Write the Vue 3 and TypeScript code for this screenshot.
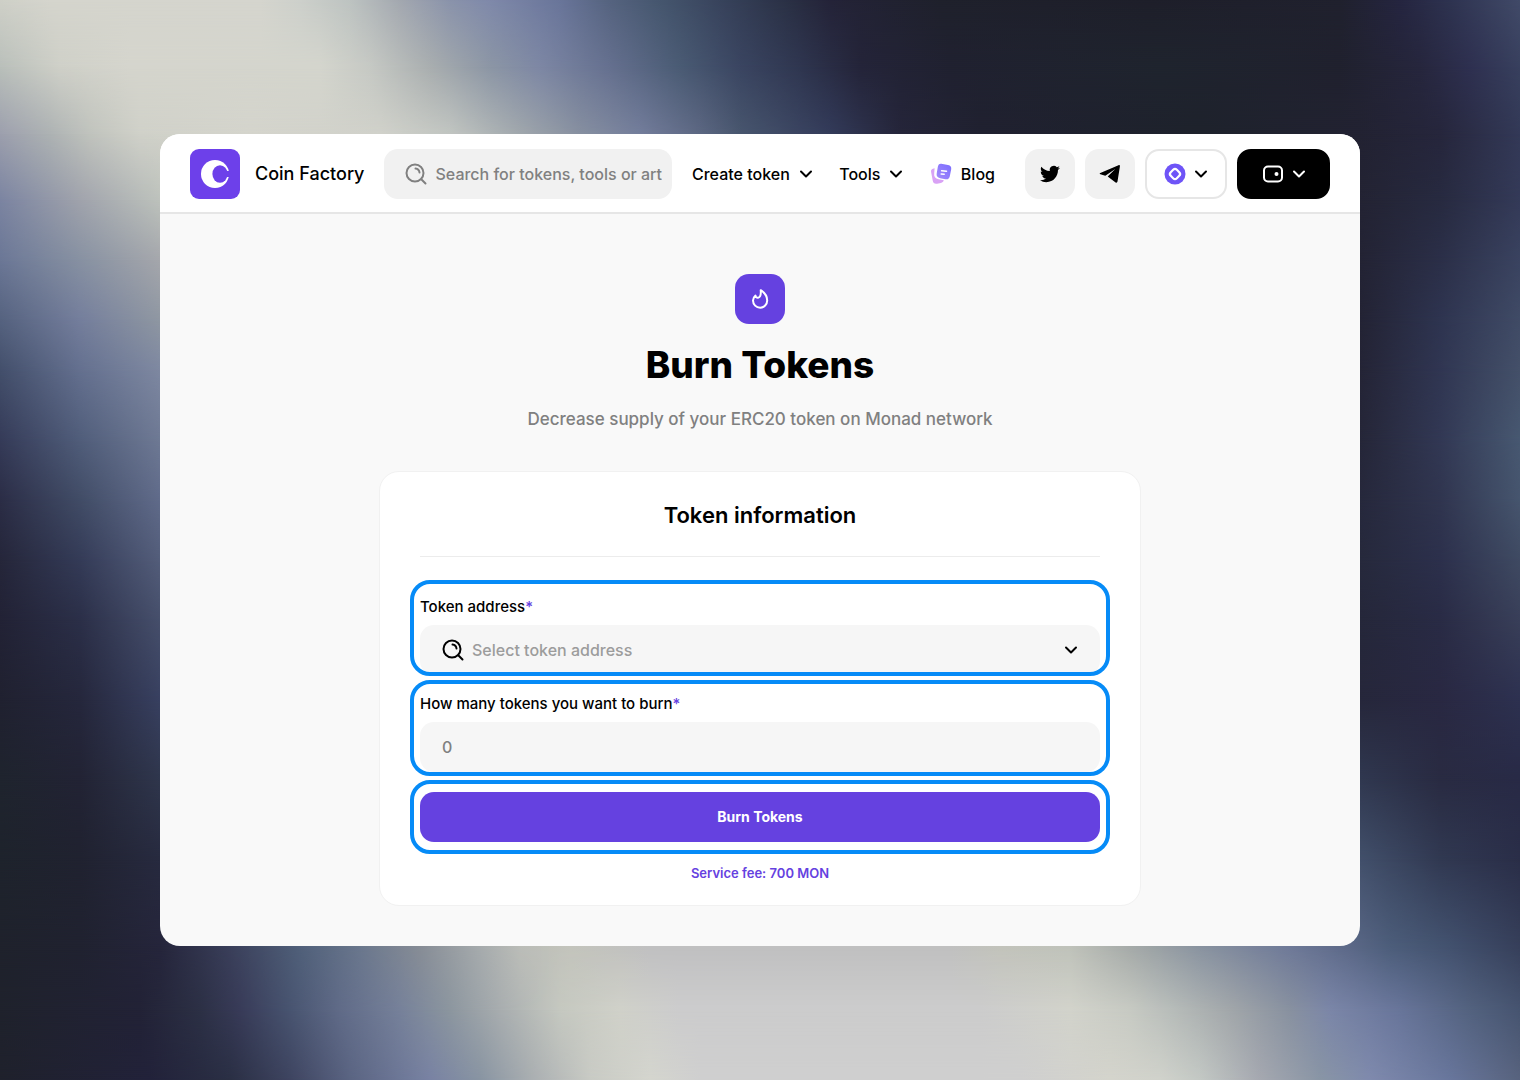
<script setup lang="ts">
import { ref } from 'vue'

type Stop = [x: number, color: string]
interface Row {
  y: number
  stops: Stop[]
}

// Colour mesh of the backdrop: each row is a horizontal gradient that fades into the next one.
const MESH_WIDTH = 1520
const MESH_HEIGHT = 1080

const side = (y: number, l: string[], r: string[]): Row => ({
  y,
  stops: [
    [0, l[0]], [80, l[1]], [160, l[2]],
    [1360, r[0]], [1440, r[1]], [1520, r[2]],
  ],
})

const rows: Row[] = [
  { y: 0, stops: [[0, '#cfd0c8'], [50, '#d5d5cd'], [260, '#d5d5ce'], [300, '#cdd0cb'], [350, '#bdc3c1'], [400, '#a3a8b0'], [450, '#8a93ab'], [490, '#7f89aa'], [560, '#69759a'], [610, '#55637f'], [660, '#45566e'], [720, '#38435c'], [790, '#2a3044'], [830, '#242338'], [940, '#1f212c'], [1150, '#1e1f2a'], [1340, '#20212e'], [1400, '#252540'], [1450, '#2e3350'], [1520, '#414a68']] },
  { y: 67, stops: [[0, '#b9bfba'], [60, '#cfd0c8'], [130, '#d5d5cd'], [320, '#d4d5cd'], [370, '#c6c9c4'], [430, '#a9aeaf'], [490, '#8c96a5'], [540, '#7d87a4'], [610, '#65708f'], [680, '#4a5b74'], [740, '#3a4561'], [800, '#2f3650'], [860, '#242439'], [950, '#202130'], [1160, '#1f242e'], [1340, '#20212e'], [1420, '#26263d'], [1470, '#2e3050'], [1520, '#38405e']] },
  { y: 134, stops: [[0, '#9c9fad'], [50, '#adb2b3'], [90, '#c0c3bd'], [140, '#d0d1c9'], [250, '#d4d4cc'], [380, '#d0d1ca'], [450, '#c1c5c1'], [520, '#a0a7ac'], [580, '#868fa0'], [640, '#737d9b'], [700, '#5c6782'], [740, '#48566e'], [830, '#333b5a'], [900, '#25253a'], [980, '#202130'], [1200, '#1e222c'], [1360, '#222232'], [1440, '#26263c'], [1520, '#333957']] },
  side(200, ['#7b84a1', '#a0a3ac', '#bdc2bc'], ['#232333', '#272a40', '#343a58']),
  side(260, ['#6b7796', '#8791a2', '#a5a7ac'], ['#232334', '#2b2f48', '#3a4360']),
  side(320, ['#55627f', '#747e9c', '#8f97a2'], ['#232334', '#2e3450', '#404b66']),
  side(370, ['#434f6b', '#64708f', '#7e88a1'], ['#242436', '#303652', '#445069']),
  side(440, ['#353b58', '#505d7a', '#6e7994'], ['#252638', '#323854', '#475871']),
  side(500, ['#2b2d46', '#414c66', '#606b8a'], ['#26283c', '#30354f', '#46556e']),
  side(560, ['#25263a', '#343b57', '#535d7a'], ['#26293c', '#2c304c', '#3f4a62']),
  side(620, ['#222235', '#2b2f48', '#464f6b'], ['#25273a', '#292b45', '#393f59']),
  side(700, ['#202130', '#25273c', '#384060'], ['#26273b', '#292842', '#2d3150']),
  side(780, ['#1f242e', '#222334', '#2f364c'], ['#303850', '#292b42', '#282a46']),
  side(860, ['#1e232c', '#202230', '#272a3f'], ['#42506b', '#313952', '#2a2e48']),
  { y: 946, stops: [[0, '#1f222c'], [80, '#202230'], [160, '#25253b'], [230, '#3a3f5a'], [300, '#50607a'], [360, '#6a778d'], [420, '#878d96'], [480, '#a6abad'], [520, '#bbbdb8'], [570, '#c3c4bc'], [650, '#c0c0c1'], [950, '#c0c0c0'], [1000, '#c2c3bb'], [1070, '#bfc2ba'], [1130, '#a5aaa8'], [1200, '#8993a0'], [1290, '#6e7998'], [1350, '#5b6887'], [1390, '#4c5d7a'], [1450, '#42516e'], [1520, '#363f5a']] },
  { y: 1010, stops: [[0, '#1f222c'], [140, '#222236'], [200, '#2c3045'], [240, '#383b58'], [290, '#485470'], [340, '#606b88'], [400, '#76819a'], [450, '#8c969f'], [500, '#a8adaf'], [560, '#c5c8c0'], [620, '#d0d1c9'], [680, '#cccccd'], [980, '#cccccc'], [1070, '#d2d3cb'], [1130, '#c7cac3'], [1170, '#b8bdba'], [1230, '#a2a7aa'], [1290, '#8891a0'], [1330, '#7b86a8'], [1400, '#68759a'], [1470, '#53627f'], [1520, '#465470']] },
  { y: 1080, stops: [[0, '#1f212c'], [150, '#22223a'], [230, '#2a2f44'], [290, '#3e4460'], [350, '#5a6482'], [430, '#7882a3'], [480, '#8894a2'], [530, '#a8adb0'], [590, '#c8cac4'], [650, '#d4d5ce'], [700, '#cfcfcf'], [1020, '#cfcfcf'], [1110, '#d4d4cc'], [1160, '#d0d2cb'], [1200, '#c3c8c4'], [1260, '#a5a8b0'], [1320, '#8995a5'], [1370, '#7f8aad'], [1450, '#68769c'], [1520, '#58637e']] },
]

const layers = rows.map((row, i) => {
  const stops = row.stops.map(([x, c]) => `${c} ${((x / MESH_WIDTH) * 100).toFixed(2)}%`).join(', ')
  const style: Record<string, string> = { backgroundImage: `linear-gradient(to right, ${stops})` }
  if (i > 0) {
    const from = ((rows[i - 1].y / MESH_HEIGHT) * 100).toFixed(2)
    const to = ((row.y / MESH_HEIGHT) * 100).toFixed(2)
    style.maskImage = `linear-gradient(to bottom, transparent ${from}%, #000 ${to}%)`
  }
  return style
})

const query = ref('')
const address = ref('')
const amount = ref('')
</script>

<template>
  <div class="page">
    <div class="backdrop" aria-hidden="true">
      <div v-for="(layer, i) in layers" :key="i" class="backdrop-row" :style="layer"></div>
    </div>

    <div class="window">
      <header class="header">
        <a href="#" class="brand">
          <svg class="logo" viewBox="0 0 50 50" aria-hidden="true">
            <rect width="50" height="50" rx="9" fill="#6d40ea" />
            <circle cx="25" cy="25" r="14" fill="#fff" />
            <ellipse cx="30" cy="25" rx="7.600" ry="8.800" fill="#6d40ea" />
            <rect x="34" y="22" width="6" height="6" fill="#6d40ea" />
          </svg>
          <span>Coin Factory</span>
        </a>

        <label class="search">
          <svg width="22" height="22" viewBox="0 0 22 22" class="line" aria-hidden="true">
            <circle cx="10" cy="10" r="8.500" />
            <path d="M16.500 16.500 20.500 20.500M10.500 5.500a4.500 4.500 0 0 1 4 4" />
          </svg>
          <input v-model="query" type="text" placeholder="Search for tokens, tools or art" aria-label="Search" />
        </label>

        <nav class="nav">
          <button type="button" class="nav-item">
            <span>Create token</span>
            <svg width="14" height="10" viewBox="0 0 14 10" class="line chevron" aria-hidden="true"><path d="M2 2.500 7 7.500l5-5" /></svg>
          </button>
          <button type="button" class="nav-item">
            <span>Tools</span>
            <svg width="14" height="10" viewBox="0 0 14 10" class="line chevron" aria-hidden="true"><path d="M2 2.500 7 7.500l5-5" /></svg>
          </button>
          <a href="#" class="nav-item">
            <svg width="22" height="22" viewBox="0 0 22 22" aria-hidden="true">
              <defs>
                <linearGradient id="blog-front" x1="1" y1="0" x2="0" y2="1">
                  <stop offset="0" stop-color="#7a6cff" />
                  <stop offset="1" stop-color="#a58cfa" />
                </linearGradient>
              </defs>
              <path
                fill="#d9a2f5"
                d="M4.600 5.300 2.900 5.800C1.400 6.300.8 7.400 1.100 8.900l1.600 8.600c.5 2.600 2 3.700 4.400 3.200l3.800-.8c1.500-.4 2.500-1.300 2.900-2.700l-5.200-.9c-3.300-.7-4.900-2.900-4.400-6.100z"
              />
              <path
                fill="url(#blog-front)"
                d="M11.300.7 18 1.900c2.600.5 3.600 2 3.200 4.400l-1.400 6.900c-.5 2.400-2 3.500-4.400 3l-5.200-1c-2.800-.5-4-2.100-3.500-4.600L7.800 4C8.200 1.600 9.300.4 11.300.7z"
              />
              <path d="M11.600 7.800l4.900.4M11.200 11l3 .3" stroke="#fff" stroke-width="1.500" stroke-linecap="round" />
            </svg>
            <span>Blog</span>
          </a>
        </nav>

        <div class="actions">
          <a href="#" class="tile" aria-label="Twitter">
            <svg width="20" height="20" viewBox="0 0 24 24" aria-hidden="true">
              <path
                fill="#000"
                d="M23.953 4.570a10 10 0 0 1-2.825.775 4.958 4.958 0 0 0 2.163-2.723c-.951.555-2.005.959-3.127 1.184a4.920 4.920 0 0 0-8.384 4.482C7.690 8.095 4.067 6.130 1.640 3.162a4.822 4.822 0 0 0-.666 2.475c0 1.710.87 3.213 2.188 4.096a4.904 4.904 0 0 1-2.228-.616v.06a4.923 4.923 0 0 0 3.946 4.827 4.996 4.996 0 0 1-2.212.085 4.936 4.936 0 0 0 4.604 3.417 9.867 9.867 0 0 1-6.102 2.105c-.39 0-.779-.023-1.170-.067a13.995 13.995 0 0 0 7.557 2.209c9.053 0 13.998-7.496 13.998-13.985 0-.21 0-.42-.015-.63A9.935 9.935 0 0 0 24 4.590z"
              />
            </svg>
          </a>
          <a href="#" class="tile" aria-label="Telegram">
            <svg width="22" height="20" viewBox="0 0 22 20" aria-hidden="true">
              <path
                fill="#000"
                d="M19.500 1.200 1.300 8.900c-.8.400-.8 1 .1 1.300l4.900 1.500L16.300 5l-7.600 7.500 7.900 5.900c.9.600 1.600.3 1.900-.8l2.400-15.200c.1-1.100-.5-1.600-1.400-1.200z"
              />
            </svg>
          </a>
          <button type="button" class="pill" aria-label="Network">
            <svg width="22" height="22" viewBox="0 0 22 22" aria-hidden="true">
              <circle cx="11" cy="11" r="10.500" fill="#6e54f7" />
              <rect x="6.700" y="6.700" width="8.600" height="8.600" rx="2.600" transform="rotate(45 11 11)" fill="none" stroke="#fff" stroke-width="2.200" />
            </svg>
            <svg width="14" height="10" viewBox="0 0 14 10" class="line chevron" aria-hidden="true"><path d="M2 2.500 7 7.500l5-5" /></svg>
          </button>
          <button type="button" class="pill dark" aria-label="Wallet">
            <svg width="22" height="18" viewBox="0 0 22 18" aria-hidden="true">
              <rect x="2" y="1.500" width="18" height="15" rx="4" fill="none" stroke="#fff" stroke-width="2" />
              <circle cx="14.500" cy="9" r="2" fill="#fff" />
            </svg>
            <svg width="14" height="10" viewBox="0 0 14 10" class="line chevron" aria-hidden="true"><path d="M2 2.500 7 7.500l5-5" /></svg>
          </button>
        </div>
      </header>

      <main class="main">
        <div class="badge">
          <svg width="24" height="24" viewBox="0 0 24 24" class="line" aria-hidden="true">
            <path d="M12.700 3.200C16.600 5.700 19.200 9.200 19.200 13.500a7.100 7.100 0 0 1-14.200.1c0-2 .9-3.700 2.500-5 .2 1.500 1.200 2.300 2.500 2.100 2.200-.3 3.100-3.300 2.700-7.500z" />
          </svg>
        </div>
        <h1>Burn Tokens</h1>
        <p class="subtitle">Decrease supply of your ERC20 token on Monad network</p>

        <form class="card" @submit.prevent>
          <h2>Token information</h2>
          <div class="fields">
            <div class="field">
              <label for="address">Token address<span class="star">*</span></label>
              <div class="control">
                <svg width="22" height="22" viewBox="0 0 22 22" class="line glass" aria-hidden="true">
                  <circle cx="10" cy="10" r="8.500" />
                  <path d="M16.500 16.500 20.500 20.500M10.500 5.500a4.500 4.500 0 0 1 4 4" />
                </svg>
                <select id="address" v-model="address">
                  <option value="">Select token address</option>
                </select>
                <svg width="14" height="10" viewBox="0 0 14 10" class="line chevron caret" aria-hidden="true"><path d="M2 2.500 7 7.500l5-5" /></svg>
              </div>
            </div>
            <div class="field amount">
              <label for="amount">How many tokens you want to burn<span class="star">*</span></label>
              <input id="amount" v-model="amount" type="text" inputmode="decimal" placeholder="0" />
            </div>
            <div class="field action">
              <button type="submit" class="submit">Burn Tokens</button>
            </div>
          </div>
          <p class="fee">Service fee: 700 MON</p>
        </form>
      </main>
    </div>
  </div>
</template>

<style>
body {
  margin: 0;
}
</style>

<style scoped>
* {
  box-sizing: border-box;
}

.page {
  position: relative;
  display: flex;
  justify-content: center;
  min-height: 100vh;
  padding: 134px 160px;
  font-family: Inter, 'Liberation Sans', sans-serif;
  font-size: 16px;
  font-weight: 500;
  line-height: 20px;
  color: #000;
}

.backdrop,
.backdrop-row {
  position: absolute;
  inset: 0;
}

.window {
  position: relative;
  flex: 1;
  min-width: 0;
  border-radius: 20px;
  background: #f9f9f9;
  overflow: hidden;
}

button,
input,
select {
  font: inherit;
  color: inherit;
  border: 0;
  outline: 0;
  background: none;
}

button {
  padding: 0;
  cursor: pointer;
}

a {
  color: inherit;
  text-decoration: none;
}

svg {
  display: block;
  flex: none;
}

.line {
  fill: none;
  stroke: currentColor;
  stroke-width: 2;
  stroke-linecap: round;
  stroke-linejoin: round;
}

.header {
  display: flex;
  align-items: center;
  gap: 20px;
  height: 80px;
  padding: 2px 30px 0;
  border-bottom: 2px solid #e6e6e6;
  background: #fff;
}

.brand {
  display: flex;
  align-items: center;
  gap: 15px;
  flex: 0 0 174px;
  font-size: 18px;
  white-space: nowrap;
}

.logo {
  width: 50px;
  height: 50px;
}

.search {
  display: flex;
  align-items: center;
  gap: 8px;
  flex: 1;
  min-width: 0;
  height: 50px;
  padding: 0 10px 0 21px;
  border-radius: 14px;
  background: #f1f1f1;
  color: #808080;
}

.search input {
  flex: 1;
  min-width: 0;
  padding: 0;
}

.search input::placeholder {
  color: #808080;
  opacity: 1;
}

.nav {
  display: flex;
  justify-content: space-between;
  flex: 0 0 303px;
}

.nav-item {
  display: flex;
  align-items: center;
  gap: 9px;
  white-space: nowrap;
}

.actions {
  display: flex;
  gap: 10px;
  margin-left: 10px;
}

.tile,
.pill {
  display: flex;
  align-items: center;
  justify-content: center;
  height: 50px;
  border-radius: 14px;
}

.tile {
  width: 50px;
  background: #f1f1f1;
}

.pill {
  gap: 8px;
  width: 82px;
  border: 2px solid #e6e6e6;
}

.pill.dark {
  width: 93px;
  border-color: #000;
  background: #000;
  color: #fff;
}

.main {
  display: flex;
  flex-direction: column;
  align-items: center;
  padding: 60px 40px 39px;
}

.badge {
  display: grid;
  place-items: center;
  width: 50px;
  height: 50px;
  border-radius: 14px;
  background: #6541e0;
  color: #fff;
}

h1,
h2,
p {
  margin: 0;
  text-align: center;
}

h1 {
  margin-top: 17px;
  font-size: 37px;
  font-weight: 800;
  line-height: 48px;
}

.subtitle {
  margin-top: 20px;
  font-size: 17px;
  line-height: 20px;
  color: #808080;
}

.card {
  width: 100%;
  max-width: 762px;
  margin-top: 42px;
  padding: 29px 30px 22px;
  border: 1px solid #f1f1f1;
  border-radius: 20px;
  background: #fff;
}

h2 {
  margin: 0 10px;
  padding-bottom: 27px;
  border-bottom: 1px solid #ececec;
  font-size: 22px;
  font-weight: 600;
  line-height: 28px;
}

.fields {
  display: flex;
  flex-direction: column;
  gap: 4px;
  margin-top: 23px;
}

.field {
  position: relative;
  display: flex;
  flex-direction: column;
  gap: 8px;
  min-height: 96px;
  padding: 17px 10px 0;
}

.field label {
  font-size: 15px;
}

.field::after {
  content: '';
  position: absolute;
  inset: 0;
  border: 4px solid #068bf7;
  border-radius: 20px;
  pointer-events: none;
}

.field.amount {
  padding-top: 14px;
}

.field.action {
  min-height: 74px;
  padding-top: 12px;
}

.star {
  color: #6541e0;
}

.control {
  position: relative;
}

.glass,
.caret {
  position: absolute;
  top: 50%;
  transform: translateY(-50%);
  pointer-events: none;
}

.glass {
  left: 22px;
}

.caret {
  right: 22px;
}

select,
.field input {
  display: block;
  width: 100%;
  height: 50px;
  padding: 0 22px;
  border-radius: 14px;
  background: #f6f6f6;
}

select {
  appearance: none;
  padding: 0 52px;
  color: #9c9c9c;
}

.field input::placeholder {
  color: #808080;
  opacity: 1;
}

.submit {
  height: 50px;
  border-radius: 14px;
  background: #6541e0;
  color: #fff;
  font-size: 14px;
  font-weight: 700;
}

.fee {
  margin-top: 9px;
  font-size: 13px;
  font-weight: 600;
  color: #6541e0;
}
</style>
